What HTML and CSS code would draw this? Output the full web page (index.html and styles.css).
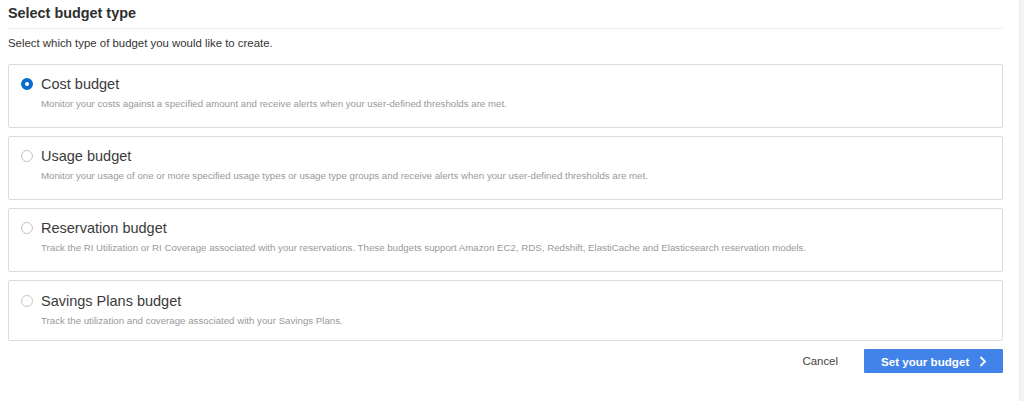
FILE: index.html
```html
<!DOCTYPE html>
<html lang="en">
<head>
<meta charset="utf-8">
<title>Select budget type</title>
<link rel="stylesheet" href="styles.css">
</head>
<body>
<div class="page">
  <main class="main">
    <h2 class="heading">Select budget type</h2>
    <p class="subtitle">Select which type of budget you would like to create.</p>
    <div class="options">
      <label class="card">
        <span class="radio radio--checked"></span>
        <span class="card-body">
          <span class="card-title">Cost budget</span>
          <span class="card-desc">Monitor your costs against a specified amount and receive alerts when your user-defined thresholds are met.</span>
        </span>
      </label>
      <label class="card">
        <span class="radio"></span>
        <span class="card-body">
          <span class="card-title">Usage budget</span>
          <span class="card-desc">Monitor your usage of one or more specified usage types or usage type groups and receive alerts when your user-defined thresholds are met.</span>
        </span>
      </label>
      <label class="card">
        <span class="radio"></span>
        <span class="card-body">
          <span class="card-title">Reservation budget</span>
          <span class="card-desc">Track the RI Utilization or RI Coverage associated with your reservations. These budgets support Amazon EC2, RDS, Redshift, ElastiCache and Elasticsearch reservation models.</span>
        </span>
      </label>
      <label class="card card--last">
        <span class="radio"></span>
        <span class="card-body">
          <span class="card-title">Savings Plans budget</span>
          <span class="card-desc">Track the utilization and coverage associated with your Savings Plans.</span>
        </span>
      </label>
    </div>
    <div class="actions">
      <span class="cancel">Cancel</span>
      <button class="primary" type="button"><span class="primary-label">Set your budget</span><svg class="chev" width="8" height="11" viewBox="0 0 8 11"><path d="M1.5 1 L6 5.5 L1.5 10" fill="none" stroke="#fff" stroke-width="1.8"/></svg></button>
    </div>
  </main>
  <div class="rail"></div>
</div>
</body>
</html>
```

FILE: styles.css
```css
html, body {
  margin: 0;
  padding: 0;
  background: #fff;
  font-family: "Liberation Sans", Arial, sans-serif;
  color: #333;
}
.page {
  display: flex;
  height: 401px;
}
.main {
  flex: 1;
  padding: 0 16px 0 8px;
}
.rail {
  width: 4px;
  background: #f3f4f4;
  border-left: 1px solid #e9ebeb;
}
.heading {
  margin: 0;
  padding: 4px 0 6px;
  font-size: 14.4px;
  line-height: 18px;
  font-weight: bold;
  color: #2e2e2e;
  border-bottom: 1px solid #eaeded;
}
.subtitle {
  margin: 6px 0 0;
  font-size: 11.4px;
  line-height: 16px;
  color: #333;
}
.options {
  margin-top: 13px;
  display: flex;
  flex-direction: column;
  gap: 8px;
}
.card {
  display: flex;
  align-items: flex-start;
  gap: 8px;
  border: 1px solid #dcdcdc;
  border-radius: 2px;
  padding: 10px 12px 15px;
  box-sizing: border-box;
  height: 64px;
}
.card--last {
  height: 61px;
  padding-top: 11px;
}
.radio {
  flex: none;
  width: 12px;
  height: 12px;
  box-sizing: border-box;
  border-radius: 50%;
  border: 1px solid #c6c6c6;
  margin-top: 3px;
  background: #fff;
}
.radio--checked {
  border: 4px solid #0b6ccc;
}
.card-body {
  display: flex;
  flex-direction: column;
  gap: 4px;
}
.card-title {
  font-size: 14.5px;
  line-height: 18px;
  color: #3a3a3a;
}
.card-desc {
  font-size: 9.7px;
  line-height: 14px;
  color: #999;
}
.actions {
  margin-top: 8px;
  display: flex;
  justify-content: flex-end;
  align-items: center;
  gap: 26px;
}
.cancel {
  font-size: 11.4px;
  color: #444;
}
.primary {
  display: flex;
  align-items: center;
  gap: 10px;
  height: 24px;
  width: 139px;
  box-sizing: border-box;
  padding: 0 0 0 17px;
  border: none;
  border-radius: 1px;
  background: #4183e8;
  color: #fff;
  font-family: "Liberation Sans", Arial, sans-serif;
  font-size: 11.6px;
  font-weight: bold;
  white-space: nowrap;
  cursor: pointer;
}
.primary-label {
  flex: none;
}
.chev {
  display: block;
  flex: none;
}
```
